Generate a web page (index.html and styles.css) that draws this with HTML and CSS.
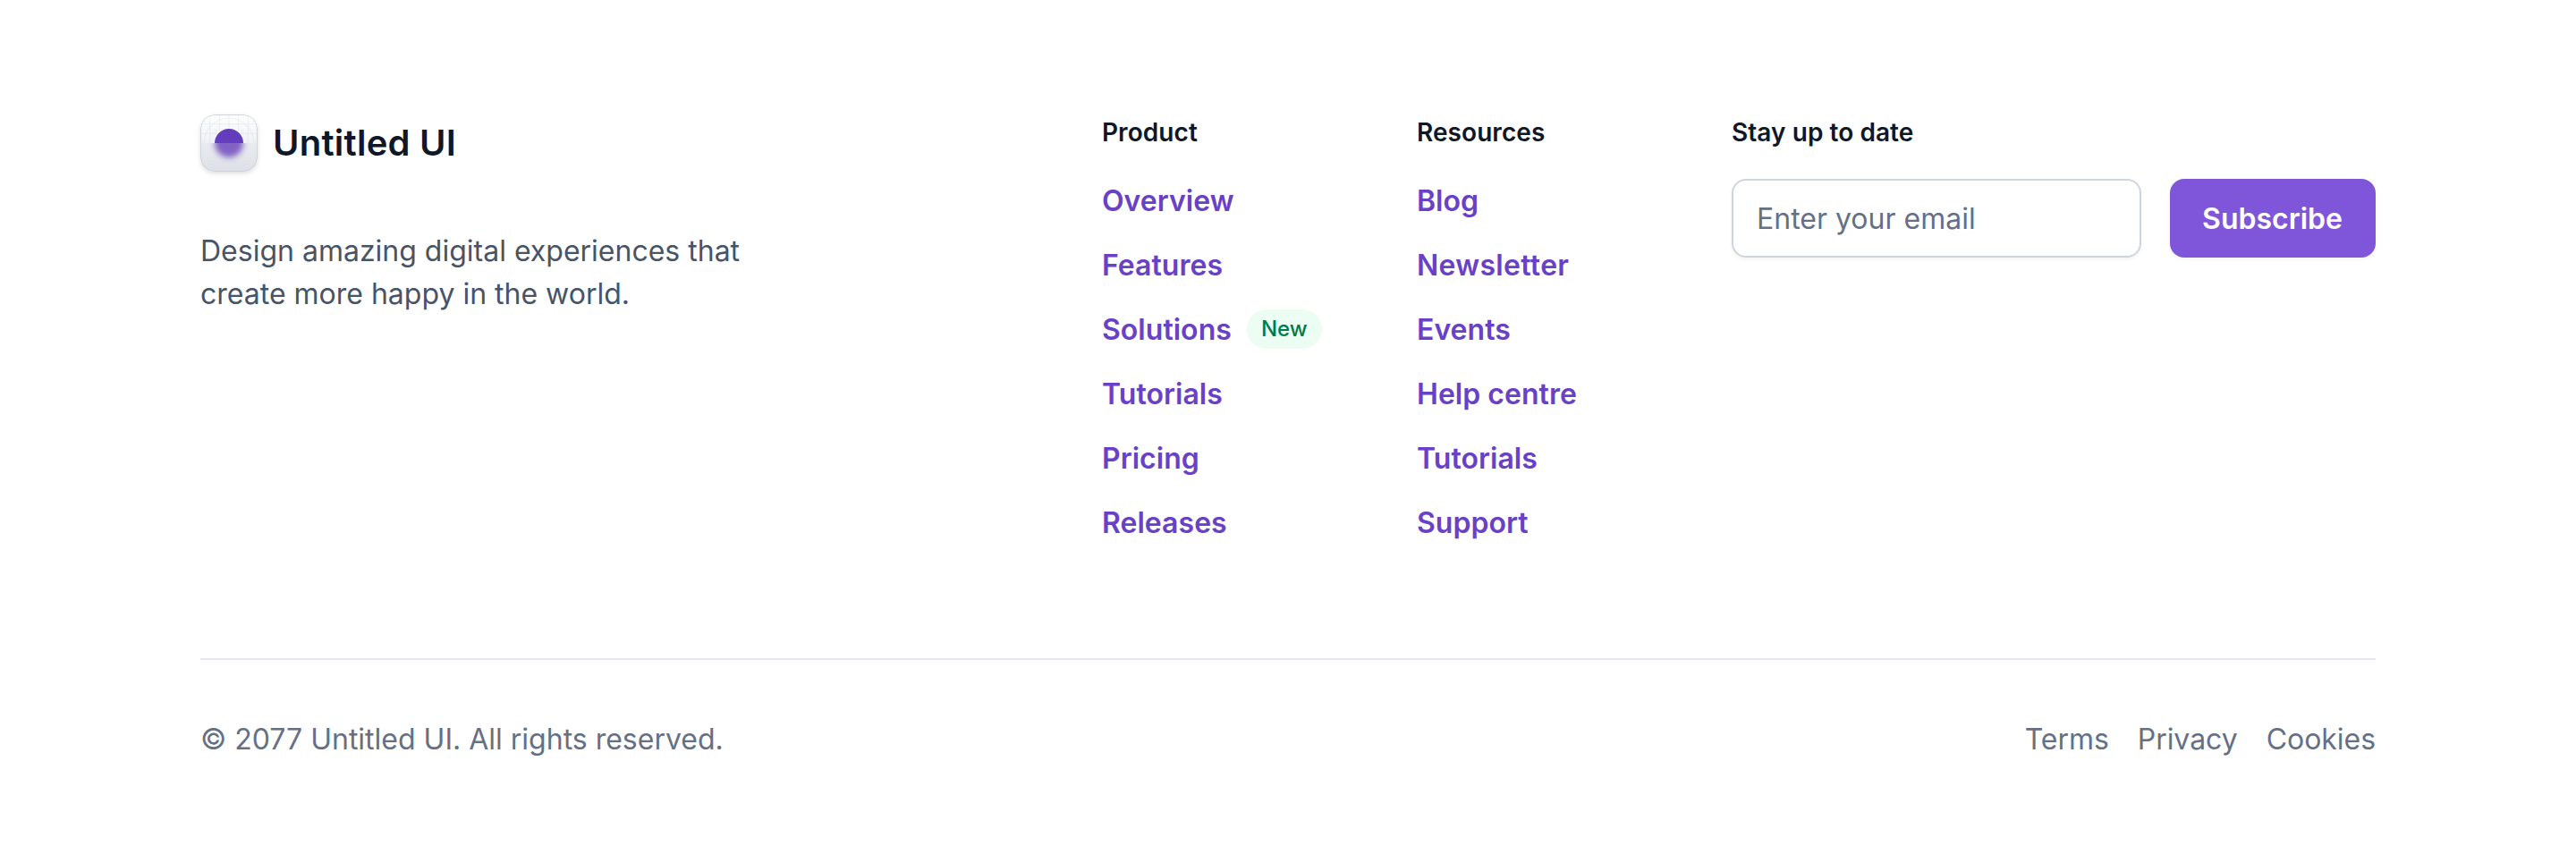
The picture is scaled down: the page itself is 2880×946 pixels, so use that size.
FILE: index.html
```
<!DOCTYPE html>
<html lang="en">
<head>
<meta charset="utf-8">
<title>Untitled UI</title>
<link rel="stylesheet" href="styles.css">
</head>
<body>
<footer class="footer">
  <div class="footer-top">
    <div class="brand">
      <div class="logo">
        <svg class="logo-mark" viewBox="0 0 64 64" aria-hidden="true">
          <defs>
            <linearGradient id="tile" x1="0" y1="0" x2="0" y2="1">
              <stop offset="0" stop-color="#fff"/>
              <stop offset="1" stop-color="#dde1e7"/>
            </linearGradient>
            <linearGradient id="glass" x1="0" y1="0" x2="0" y2="1">
              <stop offset="0" stop-color="#e9ecf0"/>
              <stop offset="1" stop-color="#dce0e6"/>
            </linearGradient>
            <linearGradient id="orb" x1="0.3" y1="1" x2="0.7" y2="0">
              <stop offset="0" stop-color="#6941c6"/>
              <stop offset="1" stop-color="#613bb8"/>
            </linearGradient>
            <clipPath id="round"><rect width="64" height="64" rx="16"/></clipPath>
            <clipPath id="upper"><rect width="64" height="32"/></clipPath>
            <clipPath id="lower"><rect y="32" width="64" height="32"/></clipPath>
            <filter id="soft" x="-50%" y="-50%" width="200%" height="200%"><feGaussianBlur stdDeviation="3.2"/></filter>
          </defs>
          <g clip-path="url(#round)">
            <rect width="64" height="64" fill="url(#tile)"/>
            <g stroke="#d0d5dd" stroke-opacity=".4" fill="none" stroke-width=".8">
              <path d="M10.7 0V64M21.3 0V64M32 0V64M42.7 0V64M53.3 0V64M0 10.7H64M0 21.3H64"/>
              <circle cx="32" cy="32" r="28"/>
            </g>
            <circle cx="32" cy="32" r="16" fill="url(#orb)" clip-path="url(#upper)"/>
            <rect y="32" width="64" height="32" fill="url(#glass)"/>
            <g clip-path="url(#lower)"><circle cx="32" cy="32" r="16" fill="#6237b8" opacity=".76" filter="url(#soft)"/></g>
          </g>
          <rect x=".5" y=".5" width="63" height="63" rx="15.5" fill="none" stroke="#d0d5dd"/>
        </svg>
        <span class="logo-name">Untitled UI</span>
      </div>
      <p class="tagline">Design amazing digital experiences that create more happy in the world.</p>
    </div>
    <nav class="column">
      <h2 class="heading">Product</h2>
      <ul class="links">
        <li><a class="link">Overview</a></li>
        <li><a class="link">Features</a></li>
        <li><a class="link">Solutions</a><span class="badge">New</span></li>
        <li><a class="link">Tutorials</a></li>
        <li><a class="link">Pricing</a></li>
        <li><a class="link">Releases</a></li>
      </ul>
    </nav>
    <nav class="column">
      <h2 class="heading">Resources</h2>
      <ul class="links">
        <li><a class="link">Blog</a></li>
        <li><a class="link link-wide">Newsletter</a></li>
        <li><a class="link">Events</a></li>
        <li><a class="link">Help centre</a></li>
        <li><a class="link">Tutorials</a></li>
        <li><a class="link">Support</a></li>
      </ul>
    </nav>
    <form class="newsletter">
      <label class="heading" for="email">Stay up to date</label>
      <div class="field-row">
        <input class="input" id="email" type="email" placeholder="Enter your email">
        <button class="button" type="button">Subscribe</button>
      </div>
    </form>
  </div>
  <div class="footer-bottom">
    <p class="copyright">© 2077 Untitled UI. All rights reserved.</p>
    <nav class="legal"><a>Terms</a><a>Privacy</a><a>Cookies</a></nav>
  </div>
</footer>
</body>
</html>
```
FILE: styles.css
```
* { box-sizing: border-box; margin: 0; padding: 0; }
body {
  background: #fff;
  font-family: Inter, "Liberation Sans", sans-serif;
  font-size: 32px;
  font-weight: 380;
  line-height: 48px;
  font-optical-sizing: none;
  font-variant-ligatures: none;
  -webkit-font-smoothing: antialiased;
}
.footer { width: 2560px; margin: 0 auto; padding: 128px 64px 95px; }
.footer-top { display: grid; grid-template-columns: 1fr 288px 288px 720px; column-gap: 64px; }
.logo { display: flex; align-items: center; gap: 17px; }
.logo-mark {
  width: 64px; height: 64px; border-radius: 16px;
  box-shadow: 0 2px 4px rgba(16, 24, 40, .06), 0 2px 6px rgba(16, 24, 40, .08);
}
.logo-name { color: #101828; font-size: 40px; font-weight: 600; letter-spacing: .25px; }
.tagline { width: 640px; margin-top: 65px; color: #475467; }
.heading { display: block; color: #101828; font-size: 28px; line-height: 40px; font-weight: 600; letter-spacing: .06px; }
.links { display: grid; row-gap: 24px; margin-top: 32px; list-style: none; }
.links li { display: flex; align-items: center; gap: 17px; height: 48px; }
.link { padding-top: 2px; color: #6941c6; font-weight: 590; letter-spacing: .03px; }
.link-wide { letter-spacing: .3px; }
.badge {
  width: 84px; padding: 4px 0; border-radius: 22px; text-align: center;
  background: #ecfdf3; color: #027a48;
  font-size: 24px; line-height: 36px; font-weight: 460; letter-spacing: .06px;
}
.field-row { display: flex; gap: 32px; margin-top: 32px; }
.input {
  flex: 1; min-width: 0; height: 88px; padding: 0 26px;
  border: 2px solid #d0d5dd; border-radius: 16px; background: #fff;
  font: inherit; color: #101828;
  box-shadow: 0 2px 4px rgba(16, 24, 40, .05);
}
.input::placeholder { color: #667085; opacity: 1; }
.button {
  width: 230px; height: 88px; padding: 2px 1px 0 0; border: 0; border-radius: 16px;
  background: #7f56d9; color: #fff; font: inherit; font-weight: 590;
  box-shadow: 0 2px 4px rgba(16, 24, 40, .05);
}
.footer-bottom {
  display: flex; justify-content: space-between;
  margin-top: 128px; padding-top: 65px; border-top: 2px solid #e4e7ec; color: #667085;
}
.legal { display: flex; gap: 32px; letter-spacing: -.04px; }
```
